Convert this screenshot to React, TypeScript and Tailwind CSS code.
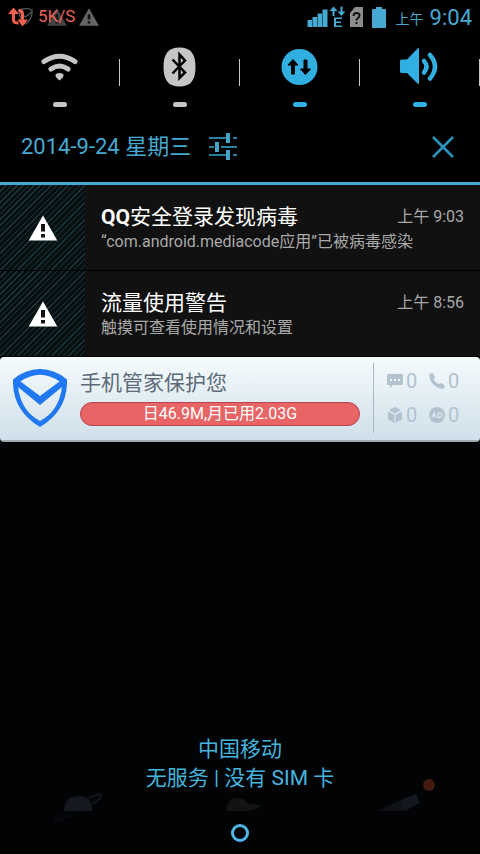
// LIBS
import type { ReactNode } from "react";
import { clsx } from "clsx";

// ICONS
const WarningIcon = ({ className }: { className?: string }) => (
  <svg viewBox="0 0 30 26" className={className} aria-hidden="true">
    <path d="M15 0.5 29.3 25.5H0.7Z" fill="currentColor" />
    <path d="M13 9h4v7.5h-4zM13 19h4v3.5h-4z" fill="#101414" />
  </svg>
);

const TrafficIcon = () => (
  <svg viewBox="0 0 26 20" className="h-5 w-[26px]" aria-hidden="true">
    <path
      d="M11 3q7-3 13 0q0.500 9-6.500 14q-6-4-6.500-14M11.500 5l6 5 6-5"
      fill="none"
      stroke="#4a4f4f"
      strokeWidth="1.500"
    />
    <g fill="none" stroke="#f0604d" strokeWidth="3">
      <path d="M5.500 5v8q0 3 5 3" />
      <path d="M10.500 3.500q4 0 4 3.500v8" />
    </g>
    <path d="M5.500 0.500 11 7H0zM14.500 19.500l5.500-7H9.500z" fill="#f0604d" />
  </svg>
);

const SignalIcon = () => (
  <svg viewBox="0 0 38 22" className="h-[22px] w-[38px]" aria-hidden="true">
    <g fill="#45a9d2">
      <path d="M0.500 14h4.500v7H0.500zM5.500 11h4.500v10H5.500zM10.500 7.500h4.500V21h-4.500zM15.500 3.500h5V21h-5z" />
      <path d="m26.500 0.500 4 4.500h-3v5h-2V5h-3zM34.500 10l-4-4.500h3V0.500h2v5h3z" />
      <path d="M27 11.500h8v1.500h-6v2.500h5V17h-5v2.500h6V21h-8z" />
    </g>
  </svg>
);

const SimIcon = () => (
  <svg viewBox="0 0 13 20" className="h-5 w-[13px]" aria-hidden="true">
    <path d="M5 0h8v20H0V6z" fill="#8d8d8d" />
    <path
      d="M3.500 9q0-3 3-3t3 2.500q0 1.500-1.500 2.500t-1.500 2.500M6.500 15v2"
      fill="none"
      stroke="#111"
      strokeWidth="2"
    />
  </svg>
);

const BatteryIcon = () => (
  <svg viewBox="0 0 14 21" className="h-[21px] w-3.5" aria-hidden="true">
    <path d="M4 0h6v2h3q1 0 1 1v17q0 1-1 1H1q-1 0-1-1V3q0-1 1-1h3z" fill="#45a9d2" />
  </svg>
);

const WifiIcon = () => (
  <svg viewBox="0 0 40 40" className="size-10" aria-hidden="true">
    <g fill="none" stroke="#c6c6c6" strokeLinecap="round">
      <path d="M4 14.500Q19.500 4 35 14.500" strokeWidth="5" />
      <path d="M11 22Q19.500 16 28 22" strokeWidth="5" />
    </g>
    <path d="M15.500 28.500q0-2.500 4-2.500t4 2.500q0 2-4 5q-4-3-4-5" fill="#c6c6c6" />
  </svg>
);

const BluetoothIcon = () => (
  <svg viewBox="0 0 40 40" className="size-10" aria-hidden="true">
    <path
      d="M19.500 0.500c11 0 16 6 16 19.500s-5 19.500-16 19.500S3.500 33.500 3.500 20 8.500 0.500 19.500 0.500"
      fill="#c6c6c6"
    />
    <path
      d="M12.500 12.500 25 25.500 19.500 31V7.500L25 13.500 12.500 26.500"
      fill="none"
      stroke="#000"
      strokeWidth="2.500"
    />
  </svg>
);

const DataIcon = () => (
  <svg viewBox="0 0 40 40" className="size-10" aria-hidden="true">
    <circle cx="19.500" cy="20" r="18" fill="#31afe0" />
    <path
      d="m13 12.500 5 5.500h-3.500v9h-3V18H8zM25.500 27.500l-5-5.500H24v-9h3v9h3.500z"
      fill="#000"
      stroke="#000"
      strokeLinejoin="round"
    />
  </svg>
);

const VolumeIcon = () => (
  <svg viewBox="0 0 40 40" className="size-10" aria-hidden="true">
    <path d="M0 14q0-1.500 1.500-1.500H7L17 2q2-2 2 0v34q0 2-2 0L7 26H1.500Q0 26 0 24.500z" fill="#31afe0" />
    <g fill="none" stroke="#31afe0" strokeWidth="4.500" strokeLinecap="round">
      <path d="M24 14q5 5.500 0 11.500" />
      <path d="M30 8q10 11.500 0 23.500" />
    </g>
  </svg>
);

const SlidersIcon = () => (
  <svg viewBox="0 0 28 28" className="size-7" aria-hidden="true">
    <path
      d="M0 5h17M24 5h4M0 14h5M12 14h16M0 22h17M24 22h4"
      stroke="#287e9d"
      strokeWidth="2"
    />
    <path d="M17 0h4v10h-4zM6 9h4v10H6zM17 17h4v10h-4z" fill="#45a3c6" />
  </svg>
);

const CloseIcon = () => (
  <svg viewBox="0 0 22 22" className="size-[22px]" aria-hidden="true">
    <path d="m1 1 20 20M21 1 1 21" stroke="#2b94bd" strokeWidth="2.500" />
  </svg>
);

const ShieldIcon = () => (
  <svg viewBox="0 0 54 58" className="h-[58px] w-[54px] shrink-0" aria-hidden="true">
    <path
      fillRule="evenodd"
      d="M27 0Q42 0 54 10.500Q55 41 27 58Q-1 41 0 10.500Q12 0 27 0M7.500 12.500Q27-1 46.500 12.500L27 27ZM5 18Q8 42 27 52Q46 42 49 18L27 36Z"
      fill="#2078f2"
    />
  </svg>
);

const MessageIcon = () => (
  <svg viewBox="0 0 16 16" className="size-4" aria-hidden="true">
    <path d="M1 1h14q1 0 1 1v9q0 1-1 1H6l-3 3v-3H1q-1 0-1-1V2q0-1 1-1" fill="#b3c2cf" />
    <path d="M3 6h2v2H3zM7 6h2v2H7zM11 6h2v2h-2z" fill="#edf6fa" />
  </svg>
);

const PhoneIcon = () => (
  <svg viewBox="0 0 16 16" className="size-4" aria-hidden="true">
    <path
      d="M0.500 1 3.500 0 6 4 4.500 6.500Q6.500 9.500 9.500 11L12 10 16 12.500 15 15.500Q10 16.500 5 12T0.500 1"
      fill="#b3c2cf"
    />
  </svg>
);

const BoxIcon = () => (
  <svg viewBox="0 0 16 16" className="size-4" aria-hidden="true">
    <path d="m8 0 6 3-6 3.500L2 3zM1 4.500 7.500 8v8L1 12.500zM15 4.500 8.500 8v8l6.500-3.500z" fill="#b3c2cf" />
  </svg>
);

const AdIcon = () => (
  <svg viewBox="0 0 16 16" className="size-4" aria-hidden="true">
    <circle cx="8" cy="8" r="8" fill="#b3c2cf" />
    <path
      d="m3 10.500 2-5 2 5M4 9h2.500M9 5.500v5q4 0 4-2.500t-4-2.500"
      fill="none"
      stroke="#dde9f0"
      strokeWidth="1.200"
    />
  </svg>
);

// Dimmed home screen drawings behind the shade
const Wallpaper = () => (
  <svg
    viewBox="0 0 480 84"
    className="absolute inset-x-0 bottom-0 w-full"
    aria-hidden="true"
  >
    <path d="M64 41q0-14 14-15t14 15z" fill="#15181e" />
    <path
      d="M89 28q13-6 12-2-1 4-9 8"
      fill="none"
      stroke="#15181e"
      strokeWidth="2"
    />
    <path d="M64 43q-10 4-9 7 5 0 18-5" fill="none" stroke="#080a0e" strokeWidth="2" />
    <path d="M226 41q1-13 12-13 6 0 10 6l14 1q-5 5-14 6z" fill="#111314" />
    <path d="m378 41 22-11 6 11z" fill="#0f1116" />
    <path d="m400 30 16-6 4 9-15 8z" fill="#151720" />
    <circle cx="429" cy="15" r="6" fill="#431a10" />
  </svg>
);

// COMP
type ToggleProps = { label: string; active?: boolean; children: ReactNode };

const Toggle = ({ label, active = false, children }: ToggleProps) => (
  <div className="flex items-start">
    <button
      type="button"
      aria-label={label}
      aria-pressed={active}
      className="flex flex-1 flex-col items-center gap-[15px]"
    >
      {children}
      <span
        className={clsx(
          "h-[5px] w-3.5 rounded-sm",
          active ? "bg-[#31afe0]" : "bg-[#c6c6c6]",
        )}
      />
    </button>
    <div className="mt-3 h-[27px] w-px bg-[#c6c6c6]" />
  </div>
);

type NotificationProps = { title: ReactNode; text: string; time: string };

const Notification = ({ title, text, time }: NotificationProps) => (
  <li className="flex h-[86px] border-b border-black bg-[#111]">
    <div className="flex w-[85px] shrink-0 items-center justify-center bg-[repeating-linear-gradient(135deg,#17393e_0px,#17393e_1px,#070f11_1px,#070f11_4px)]">
      <WarningIcon className="h-[26px] w-[30px] text-white" />
    </div>
    <div className="min-w-0 flex-1 pt-[18px] pr-4 pl-4">
      <div className="flex items-center justify-between">
        <h2 className="text-[21px] leading-7 text-white">{title}</h2>
        <time className="text-base leading-6 text-[#a8a8a8]">{time}</time>
      </div>
      <p className="text-base leading-[22px] text-[#a8a8a8]">{text}</p>
    </div>
  </li>
);

const counters = [
  { label: "短信", icon: <MessageIcon /> },
  { label: "电话", icon: <PhoneIcon /> },
  { label: "软件", icon: <BoxIcon /> },
  { label: "广告", icon: <AdIcon /> },
];

const App = () => {
  return (
    <main className="flex min-h-screen flex-col bg-[#010305] font-[Roboto,'Noto_Sans_CJK_SC',sans-serif]">
      <header className="bg-black">
        <div className="flex h-[34px] items-center justify-between px-2">
          <div className="flex items-center">
            <TrafficIcon />
            <div className="relative ml-1 flex w-16 items-center">
              <WarningIcon className="absolute left-2 h-[18px] w-[22px] text-[#454545]" />
              <span className="relative text-[17px] text-[#e86457]">5K/S</span>
              <WarningIcon className="absolute left-10 h-[18px] w-[22px] text-[#666]" />
            </div>
          </div>
          <div className="flex items-center text-[#45a9d2]">
            <SignalIcon />
            <div className="ml-[5px] flex items-center gap-[9px]">
              <SimIcon />
              <BatteryIcon />
            </div>
            <span className="ml-2.5 pt-1 text-sm">上午</span>
            <span className="ml-1.5 text-[22px]">9:04</span>
          </div>
        </div>

        <div className="grid h-[78px] grid-cols-4 pt-[13px]">
          <Toggle label="WLAN">
            <WifiIcon />
          </Toggle>
          <Toggle label="蓝牙">
            <BluetoothIcon />
          </Toggle>
          <Toggle label="数据" active>
            <DataIcon />
          </Toggle>
          <Toggle label="声音" active>
            <VolumeIcon />
          </Toggle>
        </div>

        <div className="flex h-[73px] items-center border-b-3 border-[#45a9d2] pr-[26px] pl-[21px]">
          <span className="text-[22px] leading-7 text-[#45a9d2]">
            2014-9-24 星期三
          </span>
          <button type="button" aria-label="设置" className="ml-[18px]">
            <SlidersIcon />
          </button>
          <button type="button" aria-label="关闭" className="ml-auto">
            <CloseIcon />
          </button>
        </div>
      </header>

      <ul>
        <Notification
          title={
            <>
              <span className="font-bold">QQ</span>安全登录发现病毒
            </>
          }
          text="“com.android.mediacode应用”已被病毒感染"
          time="上午 9:03"
        />
        <Notification
          title="流量使用警告"
          text="触摸可查看使用情况和设置"
          time="上午 8:56"
        />
      </ul>

      <section className="flex h-[85px] items-center rounded border-b-2 border-[#9fa9b0] bg-linear-to-b from-[#f5fbfd] to-[#cfdfe9] pb-0.5 pl-[13px]">
        <ShieldIcon />
        <div className="ml-[13px] flex-1">
          <h2 className="text-[21px] leading-7 text-[#5d6b79]">
            手机管家保护您
          </h2>
          <p className="mt-[5px] rounded-full border border-[#b84450] bg-[#e96464] text-center text-base leading-[22px] text-white">
            日46.9M,月已用2.03G
          </p>
        </div>
        <div className="ml-[13px] grid h-[70px] grid-cols-[42px_42px] content-between border-l border-[#a9b8c3] py-1.5 pr-[9px] pl-[13px]">
          {counters.map((counter) => (
            <div
              key={counter.label}
              aria-label={counter.label}
              className="flex items-center gap-[3px] text-xl leading-6 text-[#b3c2cf]"
            >
              {counter.icon}
              <span>0</span>
            </div>
          ))}
        </div>
      </section>

      <footer className="relative mt-auto">
        <Wallpaper />
        <div className="relative pb-[19px] text-center text-[21px] leading-[29px] text-[#45b4de]">
          <p>中国移动</p>
          <p>无服务 | 没有 SIM 卡</p>
        </div>
        <nav className="relative flex h-[42px] items-center justify-center">
          <button
            type="button"
            aria-label="主屏幕"
            className="size-[18px] rounded-full border-3 border-[#51b4e6]"
          />
        </nav>
      </footer>
    </main>
  );
};
export default App;
